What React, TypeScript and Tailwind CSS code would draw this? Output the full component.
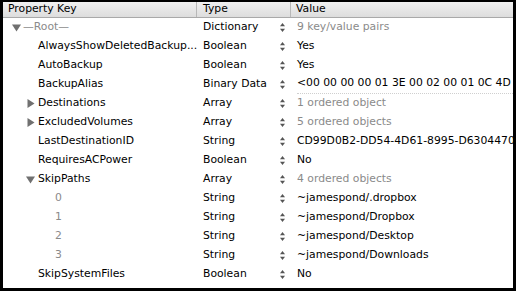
import React from "react";

type Row = {
  key: string;
  depth: number;
  toggle?: "open" | "closed";
  type: string;
  value: string;
  muted?: boolean;
  keyMuted?: boolean;
  dotted?: boolean;
};

const rows: Row[] = [
  { key: "—Root—", depth: 0, toggle: "open", type: "Dictionary", value: "9 key/value pairs", muted: true, keyMuted: true },
  { key: "AlwaysShowDeletedBackup...", depth: 1, type: "Boolean", value: "Yes" },
  { key: "AutoBackup", depth: 1, type: "Boolean", value: "Yes" },
  { key: "BackupAlias", depth: 1, type: "Binary Data", value: "<00 00 00 00 01 3E 00 02 00 01 0C 4D 2", dotted: true },
  { key: "Destinations", depth: 1, toggle: "closed", type: "Array", value: "1 ordered object", muted: true },
  { key: "ExcludedVolumes", depth: 1, toggle: "closed", type: "Array", value: "5 ordered objects", muted: true },
  { key: "LastDestinationID", depth: 1, type: "String", value: "CD99D0B2-DD54-4D61-8995-D6304470" },
  { key: "RequiresACPower", depth: 1, type: "Boolean", value: "No" },
  { key: "SkipPaths", depth: 1, toggle: "open", type: "Array", value: "4 ordered objects", muted: true },
  { key: "0", depth: 2, type: "String", value: "~jamespond/.dropbox", keyMuted: true },
  { key: "1", depth: 2, type: "String", value: "~jamespond/Dropbox", keyMuted: true },
  { key: "2", depth: 2, type: "String", value: "~jamespond/Desktop", keyMuted: true },
  { key: "3", depth: 2, type: "String", value: "~jamespond/Downloads", keyMuted: true },
  { key: "SkipSystemFiles", depth: 1, type: "Boolean", value: "No" },
];

function Triangle({ open }: { open: boolean }) {
  return (
    <svg width="9" height="9" viewBox="0 0 9 9" className="shrink-0">
      {open ? (
        <polygon points="0,1.5 9,1.5 4.5,8.5" fill="#707070" />
      ) : (
        <polygon points="1.5,0 8.5,4.5 1.5,9" fill="#707070" />
      )}
    </svg>
  );
}

function Stepper() {
  return (
    <svg width="5" height="9" viewBox="0 0 5 9" className="shrink-0">
      <polygon points="2.5,0 5,3.3 0,3.3" fill="#555" />
      <polygon points="0,5.7 5,5.7 2.5,9" fill="#555" />
    </svg>
  );
}

export default function App() {
  return (
    <div
      className="w-[516px] h-[291px] overflow-hidden bg-black pt-[2px] pl-[3px] pr-[3px] pb-[3px] text-[10.8px] text-black"
      style={{ fontFamily: '"DejaVu Sans", "Liberation Sans", sans-serif' }}
    >
      <div className="h-full bg-white flex flex-col overflow-hidden">
        <div className="h-[16px] shrink-0 flex items-center bg-gradient-to-b from-[#f1f1f1] to-[#dddddd] border-b border-[#a9a9a9]">
          <div className="w-[194px] shrink-0 pl-[5px] border-r border-[#b8b8b8] h-full flex items-center">Property Key</div>
          <div className="w-[94px] shrink-0 pl-[6px] border-r border-[#b8b8b8] h-full flex items-center">Type</div>
          <div className="flex-1 pl-[5px]">Value</div>
        </div>
        {rows.map((r, i) => (
          <div key={i} className="h-[19px] shrink-0 flex items-center">
            <div
              className={`w-[194px] shrink-0 flex items-center whitespace-nowrap ${
                r.depth === 0 ? "pl-[9px]" : r.depth === 1 ? "pl-[23px]" : "pl-[40px]"
              } ${r.keyMuted ? "text-[#8a8a8a]" : ""}`}
            >
              <span className="w-[12px] shrink-0 flex">
                {r.toggle && <Triangle open={r.toggle === "open"} />}
              </span>
              <span className={r.depth === 0 ? "-ml-[1px]" : ""}>{r.key}</span>
            </div>
            <div className="w-[94px] shrink-0 flex items-center justify-between pl-[6px] pr-[6px] whitespace-nowrap">
              <span>{r.type}</span>
              <Stepper />
            </div>
            <div
              className={`flex-1 min-w-0 pl-[6px] whitespace-nowrap overflow-hidden ${
                r.muted ? "text-[#8a8a8a]" : ""
              }`}
            >
              <span className={r.dotted ? "border-b border-dotted border-[#cfcfcf] pb-[2px] inline-block w-full" : ""}>
                {r.value}
              </span>
            </div>
          </div>
        ))}
      </div>
    </div>
  );
}
